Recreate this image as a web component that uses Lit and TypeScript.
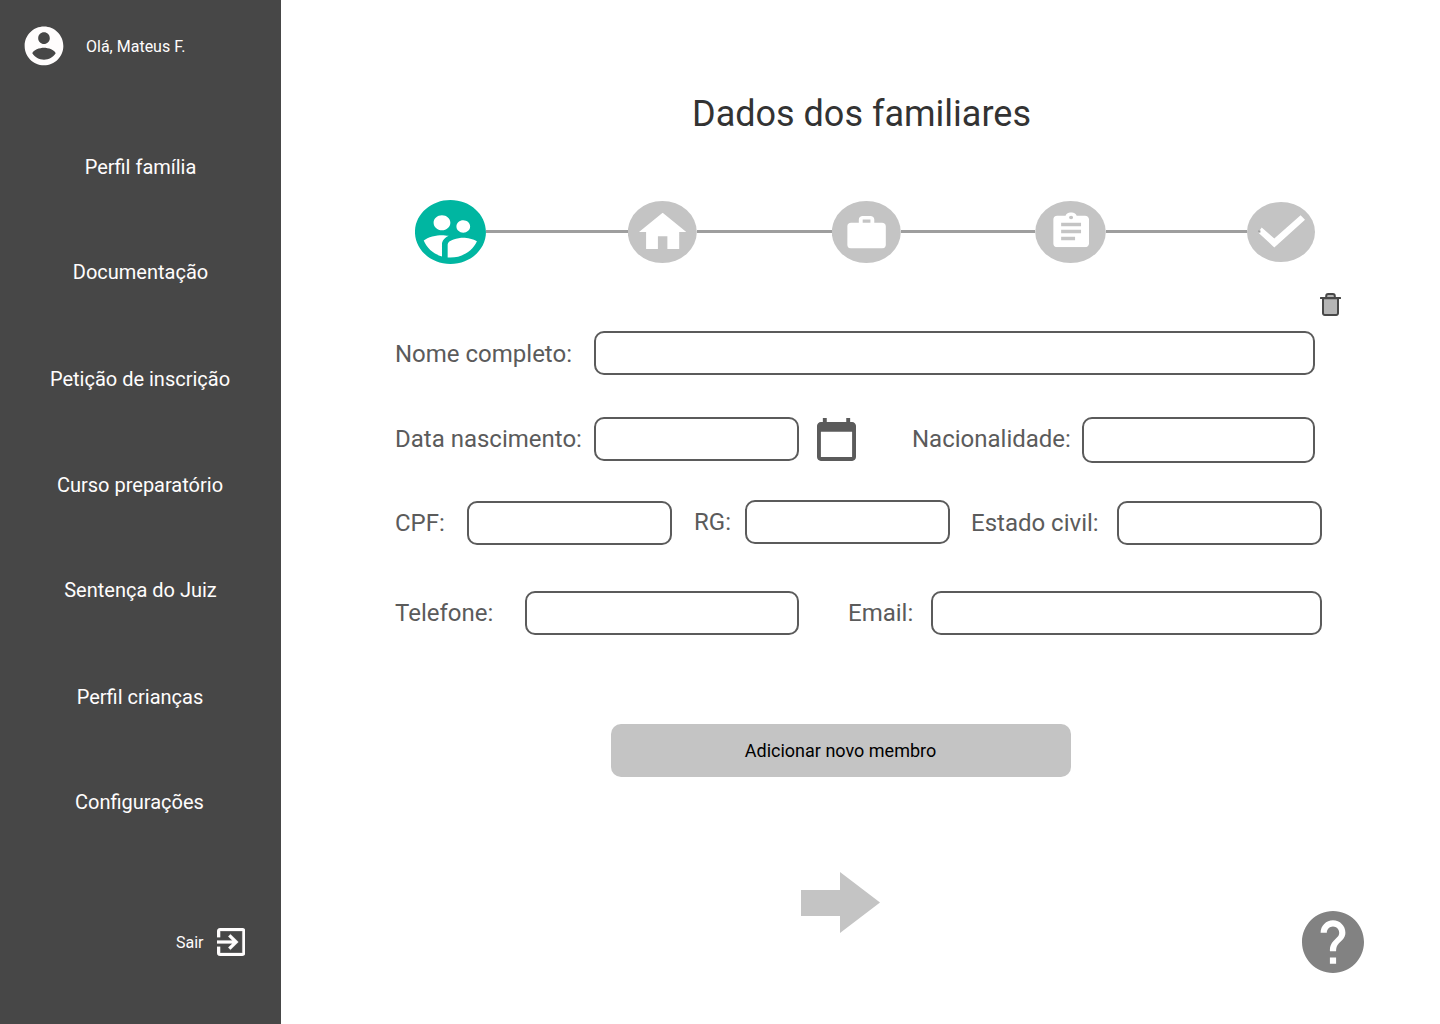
import { LitElement, html, css, svg } from "lit";
import { customElement } from "lit/decorators.js";

const ACCOUNT =
  "M12 2C6.48 2 2 6.48 2 12s4.48 10 10 10 10-4.48 10-10S17.52 2 12 2zm0 3c1.66 0 3 1.34 3 3s-1.34 3-3 3-3-1.34-3-3 1.34-3 3-3zm0 14.2c-2.5 0-4.71-1.28-6-3.22.03-1.99 4-3.08 6-3.08 1.99 0 5.97 1.09 6 3.08-1.29 1.94-3.5 3.22-6 3.22z";
const EXIT =
  "M10.09 15.59L11.5 17l5-5-5-5-1.41 1.41L12.67 11H3v2h9.67l-2.58 2.59zM19 3H5c-1.11 0-2 .9-2 2v4h2V5h14v14H5v-4H3v4c0 1.1.89 2 2 2h14c1.1 0 2-.9 2-2V5c0-1.1-.9-2-2-2z";
const FAMILY =
  "M11.99 2c-5.52 0-10 4.48-10 10s4.48 10 10 10 10-4.48 10-10-4.48-10-10-10zm3.61 6.34c1.07 0 1.93.86 1.93 1.93s-.86 1.93-1.93 1.93-1.93-.86-1.93-1.93c-.01-1.07.86-1.93 1.93-1.93zm-6-1.58c1.3 0 2.36 1.06 2.36 2.36s-1.06 2.36-2.36 2.36-2.36-1.06-2.36-2.36c0-1.31 1.05-2.36 2.36-2.36zm0 9.13v3.75c-2.4-.75-4.3-2.6-5.14-4.96 1.05-1.12 3.67-1.69 5.14-1.69.53 0 1.2.08 1.9.22-1.64.87-1.9 2.02-1.9 2.68zM11.99 20c-.27 0-.53-.01-.79-.04v-4.07c0-1.42 2.94-2.13 4.4-2.13 1.07 0 2.92.39 3.84 1.15-1.17 2.97-4.06 5.09-7.45 5.09z";
const HOME = "M10 20v-6h4v6h5v-8h3L12 3 2 12h3v8z";
const WORK =
  "M20 6h-4V4c0-1.11-.89-2-2-2h-4c-1.11 0-2 .89-2 2v2H4c-1.11 0-1.99.89-1.99 2L2 19c0 1.11.89 2 2 2h16c1.11 0 2-.89 2-2V8c0-1.11-.89-2-2-2zm-6 0h-4V4h4v2z";
const ASSIGNMENT =
  "M19 3h-4.18C14.4 1.84 13.3 1 12 1c-1.3 0-2.4.84-2.82 2H5c-1.1 0-2 .9-2 2v14c0 1.1.9 2 2 2h14c1.1 0 2-.9 2-2V5c0-1.1-.9-2-2-2zm-7 0c.55 0 1 .45 1 1s-.45 1-1 1-1-.45-1-1 .45-1 1-1zm2 14H7v-2h7v2zm3-4H7v-2h10v2zm0-4H7V7h10v2z";
const CALENDAR =
  "M20 3h-1V1h-2v2H7V1H5v2H4c-1.1 0-2 .9-2 2v16c0 1.1.9 2 2 2h16c1.1 0 2-.9 2-2V5c0-1.1-.9-2-2-2zm0 18H4V8h16v13z";
const HELP =
  "M12 2C6.48 2 2 6.48 2 12s4.48 10 10 10 10-4.48 10-10S17.52 2 12 2zm1 17h-2v-2h2v2zm2.07-7.75l-.9.92C13.45 12.9 13 13.5 13 15h-2v-.5c0-1.1.45-2.1 1.17-2.83l1.24-1.26c.37-.36.59-.86.59-1.41 0-1.1-.9-2-2-2s-2 .9-2 2H8c0-2.21 1.79-4 4-4s4 1.79 4 4c0 .88-.36 1.68-.93 2.25z";

const MENU = [
  "Perfil família",
  "Documentação",
  "Petição de inscrição",
  "Curso preparatório",
  "Sentença do Juiz",
  "Perfil crianças",
  "Configurações",
];

@customElement("app-sidebar")
export class AppSidebar extends LitElement {
  static styles = css`
    :host {
      display: flex;
      flex-direction: column;
      box-sizing: border-box;
      width: 281px;
      height: 1024px;
      flex: none;
      background: #474747;
      color: #fffdfd;
      font-family: Roboto, "Liberation Sans", sans-serif;
    }
    .user {
      display: flex;
      align-items: center;
      gap: 22px;
      padding: 26px 0 0 24px;
      height: 40px;
      font-size: 16px;
    }
    .avatar {
      width: 40px;
      height: 40px;
    }
    .menu {
      display: flex;
      flex-direction: column;
      margin-top: 48px;
      height: 741px;
    }
    .item {
      flex: none;
      box-sizing: border-box;
      height: calc(100% / 7);
      display: flex;
      align-items: center;
      justify-content: center;
      color: inherit;
      text-decoration: none;
      font-size: 20px;
      line-height: 24px;
    }
    .item:nth-child(2) { padding-bottom: 2px; }
    .item:nth-child(3) { padding-right: 1px; }
    .item:nth-child(4) { padding: 1px 1px 0 0; }
    .item:nth-child(6) { padding: 2px 1px 0 0; }
    .item:last-child { padding-right: 2px; }
    .exit {
      display: flex;
      align-items: center;
      justify-content: flex-end;
      gap: 13px;
      margin: 73px 36px 0 0;
      height: 28px;
      font-size: 16px;
    }
    .exit-icon {
      width: 28.5px;
      height: 28px;
    }
  `;

  render() {
    return html`
      <div class="user">
        <svg class="avatar" viewBox="1.67 1.72 20.67 20.67"><path fill="currentColor" d=${ACCOUNT} /></svg>
        <span>Olá, Mateus F.</span>
      </div>
      <nav class="menu">${MENU.map((m) => html`<a class="item">${m}</a>`)}</nav>
      <div class="exit">
        <span>Sair</span>
        <svg class="exit-icon" viewBox="3 3 18 18" preserveAspectRatio="none">
          <path fill="currentColor" stroke="currentColor" stroke-width="0.15" d=${EXIT} />
        </svg>
      </div>
    `;
  }
}

const glyph = (d: string, box: string, x: number, y: number, w: number, h: number) => svg`
  <svg x=${x} y=${y} width=${w} height=${h} viewBox=${box} preserveAspectRatio="none">
    <path fill="#fff" d=${d} />
  </svg>`;

@customElement("app-stepper")
export class AppStepper extends LitElement {
  static styles = css`
    :host {
      display: flex;
      align-items: center;
      height: 64px;
    }
    .step {
      display: block;
      flex: none;
    }
    .line {
      flex: none;
      height: 3px;
      margin-bottom: 1px;
      background: #9e9e9e;
    }
    .l1 { width: 141.6px; }
    .l2 { width: 135px; }
    .l3 { width: 134.4px; }
    .l4 { width: 141px; }
  `;

  render() {
    return html`
      <svg class="step" width="71" height="64" viewBox="2 2 20 20" preserveAspectRatio="none">
        <path fill="#00b6a1" d=${FAMILY} />
      </svg>
      <div class="line l1"></div>
      <svg class="step" width="69" height="62">
        <ellipse cx="34.3" cy="31" rx="34.5" ry="31" fill="#c4c4c4" />
        ${glyph(HOME, "2 3 20 17", 11, 11.7, 47.3, 36.3)}
      </svg>
      <div class="line l2"></div>
      <svg class="step" width="69" height="62">
        <ellipse cx="34.3" cy="31" rx="34.5" ry="31" fill="#c4c4c4" />
        ${glyph(WORK, "2 2 20 19", 15.2, 15, 38.7, 32.5)}
      </svg>
      <div class="line l3"></div>
      <svg class="step" width="71" height="62">
        <ellipse cx="35.5" cy="31" rx="35.3" ry="31" fill="#c4c4c4" />
        ${glyph(ASSIGNMENT, "3 1 18 20", 18.2, 11.3, 35.8, 34.9)}
      </svg>
      <div class="line l4"></div>
      <svg class="step" width="68" height="60">
        <ellipse cx="34" cy="30" rx="34" ry="30" fill="#c4c4c4" />
        <path fill="#fff" d="M14.7 25.4L27.3 36.5 53.6 13.3 58 17.7 27.3 45.5 11.2 30.6z" />
        <path fill="#9e9e9e" d="M11.2 28.4h2.2v2.2h-2.2z" />
      </svg>
    `;
  }
}

@customElement("app-root")
export class AppRoot extends LitElement {
  static styles = css`
    :host {
      display: flex;
      width: 1440px;
      height: 1024px;
      overflow: hidden;
      background: #fff;
      font-family: Roboto, "Liberation Sans", sans-serif;
    }
    .main {
      flex: 1;
      box-sizing: border-box;
      display: flex;
      flex-direction: column;
      padding: 92px 0 0 112px;
      color: #5b5b5b;
    }
    .title {
      margin: 0;
      width: 937px;
      text-align: center;
      font-size: 36px;
      line-height: 44px;
      font-weight: 400;
      color: #333;
    }
    .stepper {
      margin: 64px 0 0 22px;
    }
    .trash {
      display: block;
      margin: 29px 0 15px 927px;
    }
    .row {
      display: flex;
      align-items: flex-start;
      height: 44px;
    }
    .row + .row { margin-top: 42px; }
    .row.ids { margin-top: 39px; height: 45px; }
    .row.contact { margin-top: 46px; }
    .label {
      flex: none;
      box-sizing: border-box;
      padding-left: 2px;
      font-size: 24px;
      line-height: 44px;
      white-space: nowrap;
    }
    .field {
      flex: none;
      box-sizing: border-box;
      height: 44px;
      margin: 0;
      padding: 0 12px;
      border: 2px solid #5b5b5b;
      border-radius: 10px;
      background: #fff;
      font: inherit;
      font-size: 20px;
      color: inherit;
      outline: none;
    }
    .tall { height: 46px; }
    .low { margin-top: 1px; }
    .w201 { width: 201px; }
    .w74 { width: 74px; }
    .w51 { width: 51px; padding-left: 0; }
    .w148 { width: 148px; }
    .w132 { width: 132px; }
    .w85 { width: 85px; }
    .w172 { width: 172px; }
    .f721 { width: 721px; }
    .f205 { width: 205px; }
    .f233 { width: 233px; }
    .f274 { width: 274px; }
    .f391 { width: 391px; }
    .calendar {
      flex: none;
      margin: 1px 54px 0 18px;
    }
    .gap-rg { margin-left: 22px; }
    .gap-civil { margin-left: 19px; }
    .gap-email { margin-left: 47px; }
    .add {
      width: 460px;
      height: 53px;
      margin: 89px 0 0 218px;
      padding: 0 1px 0 0;
      border: 0;
      border-radius: 10px;
      background: #c4c4c4;
      color: #000;
      font: inherit;
      font-size: 18px;
      line-height: 53px;
    }
    .footer {
      display: flex;
      align-items: flex-start;
      margin: 95px 0 0 408px;
    }
    .help {
      margin: 39px 0 0 422px;
    }
  `;

  render() {
    return html`
      <app-sidebar></app-sidebar>
      <main class="main">
        <h1 class="title">Dados dos familiares</h1>
        <app-stepper class="stepper"></app-stepper>
        <svg class="trash" width="21" height="23" viewBox="0 0 21 23">
          <path d="M3 5.2H18V20.2a1.8 1.8 0 0 1-1.8 1.8H4.8A1.8 1.8 0 0 1 3 20.2z" fill="#b5b5b5" stroke="#484848" stroke-width="2" />
          <path d="M6.2 5V3a2 2 0 0 1 2-2h4.6a2 2 0 0 1 2 2V5z" fill="#b5b5b5" stroke="#484848" stroke-width="2" />
          <path d="M.8 5H20.2" stroke="#484848" stroke-width="2" stroke-linecap="round" />
        </svg>

        <div class="row">
          <span class="label low w201">Nome completo:</span>
          <input class="field f721" aria-label="Nome completo" />
        </div>
        <div class="row">
          <span class="label w201">Data nascimento:</span>
          <input class="field f205" aria-label="Data nascimento" />
          <svg class="calendar" width="39" height="43" viewBox="2 1 20 22" preserveAspectRatio="none">
            <path fill="#5b5b5b" d=${CALENDAR} />
          </svg>
          <span class="label w172">Nacionalidade:</span>
          <input class="field f233 tall" aria-label="Nacionalidade" />
        </div>
        <div class="row ids">
          <span class="label low w74">CPF:</span>
          <input class="field low f205" aria-label="CPF" />
          <span class="label gap-rg w51">RG:</span>
          <input class="field f205" aria-label="RG" />
          <span class="label low gap-civil w148">Estado civil:</span>
          <input class="field low f205" aria-label="Estado civil" />
        </div>
        <div class="row contact">
          <span class="label w132">Telefone:</span>
          <input class="field f274" aria-label="Telefone" />
          <span class="label gap-email w85">Email:</span>
          <input class="field f391" aria-label="Email" />
        </div>

        <button class="add">Adicionar novo membro</button>

        <div class="footer">
          <svg width="79" height="61" viewBox="0 0 79 61">
            <path fill="#c4c4c4" d="M0 18H39V0L79 30.5 39 61V44H0z" />
          </svg>
          <svg class="help" width="62" height="62" viewBox="2 2 20 20">
            <path fill="#828282" d=${HELP} />
          </svg>
        </div>
      </main>
    `;
  }
}
